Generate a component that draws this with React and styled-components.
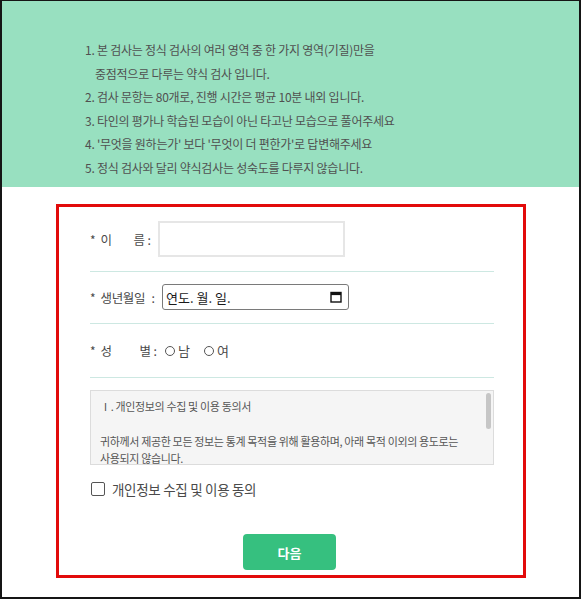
import { useState } from "react";
import styled, { createGlobalStyle } from "styled-components";

const GlobalStyle = createGlobalStyle`
  body {
    margin: 0;
    background: #fff;
    font-family: "Noto Sans CJK KR", "Noto Sans", sans-serif;
  }
`;

const notices = [
  { text: "1. 본 검사는 정식 검사의 여러 영역 중 한 가지 영역(기질)만을" },
  { text: "중점적으로 다루는 약식 검사 입니다.", indent: true },
  { text: "2. 검사 문항는 80개로, 진행 시간은 평균 10분 내외 입니다." },
  { text: "3. 타인의 평가나 학습된 모습이 아닌 타고난 모습으로 풀어주세요" },
  { text: "4. '무엇을 원하는가' 보다 '무엇이 더 편한가'로 답변해주세요" },
  { text: "5. 정식 검사와 달리 약식검사는 성숙도를 다루지 않습니다." },
];

function App() {
  const [name, setName] = useState("");
  const [gender, setGender] = useState("");
  const [agree, setAgree] = useState(false);

  return (
    <>
      <GlobalStyle />
      <Page>
        <Header>
          {notices.map((n) => (
            <Notice key={n.text} $indent={n.indent}>{n.text}</Notice>
          ))}
        </Header>

        <FormBox>
          <Row $pad="14px 0">
            <Label>
              <Star>*</Star>
              <Name $width={44}><span>이</span><span>름</span></Name>
              <span>:</span>
            </Label>
            <TextInput value={name} onChange={(e) => setName(e.target.value)} />
          </Row>

          <Row $pad="12px 0 13px">
            <Label>
              <Star>*</Star>
              <Name $width={48}>생년월일</Name>
              <span>:</span>
            </Label>
            <DateBox>
              <DateText placeholder="연도. 월. 일." />
              <svg width="12" height="12" viewBox="0 0 12 12">
                <rect x="1" y="1.5" width="10" height="9.5" fill="none" stroke="#111" strokeWidth="1.4" />
                <rect x="1" y="1.5" width="10" height="2.6" fill="#111" />
              </svg>
            </DateBox>
          </Row>

          <Row $height={53}>
            <Label>
              <Star>*</Star>
              <Name $width={50}><span>성</span><span>별</span></Name>
              <span>:</span>
            </Label>
            <RadioGroup>
              {["남", "여"].map((g) => (
                <RadioLabel key={g}>
                  <Radio
                    type="radio"
                    name="gender"
                    checked={gender === g}
                    onChange={() => setGender(g)}
                  />
                  {g}
                </RadioLabel>
              ))}
            </RadioGroup>
          </Row>

          <TermsFrame>
            <Terms>
              <TermsTitle>Ⅰ. 개인정보의 수집 및 이용 동의서</TermsTitle>
              <TermsBody>
                귀하께서 제공한 모든 정보는 통계 목적을 위해 활용하며, 아래 목적 이외의 용도로는 사용되지 않습니다.
              </TermsBody>
              <TermsBody>수집 항목 : 이름, 생년월일, 성별</TermsBody>
            </Terms>
            <ScrollThumb />
          </TermsFrame>

          <AgreeRow>
            <Check type="checkbox" checked={agree} onChange={(e) => setAgree(e.target.checked)} />
            <span>개인정보 수집 및 이용 동의</span>
          </AgreeRow>

          <ButtonWrap>
            <NextButton>다음</NextButton>
          </ButtonWrap>
        </FormBox>
      </Page>
    </>
  );
}

const Page = styled.div`
  width: 581px;
  height: 599px;
  box-sizing: border-box;
  border: 2px solid #151515;
  border-top-width: 1px;
  overflow: hidden;
`;

const Header = styled.div`
  height: 186px;
  box-sizing: border-box;
  background: #98e0c0;
  padding: 37px 0 0 83px;
  color: #505050;
  font-size: 12px;
  letter-spacing: -0.25px;
  line-height: 23.5px;
`;

const Notice = styled.div`
  padding-left: ${({ $indent }) => ($indent ? "10px" : "0")};
`;

const FormBox = styled.div`
  width: 470px;
  height: 374px;
  box-sizing: border-box;
  margin: 17px 0 0 54px;
  border: 3px solid #e20a0a;
  padding: 0 29px 0 31px;
  display: flex;
  flex-direction: column;
`;

const Row = styled.div`
  display: flex;
  align-items: center;
  padding: ${({ $pad }) => $pad || "0"};
  height: ${({ $height }) => ($height ? `${$height}px` : "auto")};
  border-bottom: 1px solid #cde8e2;
  color: #4a4a4a;
  font-size: 12.5px;
`;

const Label = styled.div`
  display: flex;
  align-items: center;
  gap: 3px;
  margin-right: 7px;
`;

const Star = styled.span`
  font-size: 12px;
  color: #4a4a4a;
`;

const Name = styled.span`
  display: inline-flex;
  justify-content: space-between;
  width: ${({ $width }) => $width}px;
  margin-left: 2px;
  letter-spacing: -0.4px;
`;

const TextInput = styled.input`
  width: 187px;
  height: 36px;
  box-sizing: border-box;
  border: 2px solid #e6e6e6;
  outline: none;
  font-size: 13px;
  padding: 0 8px;
`;

const DateBox = styled.label`
  display: flex;
  align-items: center;
  width: 187px;
  height: 26px;
  box-sizing: border-box;
  border: 1px solid #7a7a7a;
  border-radius: 3px;
  padding: 0 6px 0 3px;
`;

const DateText = styled.input`
  flex: 1;
  min-width: 0;
  border: none;
  outline: none;
  padding: 0;
  font-size: 13px;
  font-family: "Noto Sans CJK KR", sans-serif;
  &::placeholder {
    color: #1a1a1a;
  }
`;

const RadioGroup = styled.div`
  display: flex;
  gap: 14px;
  margin-left: 1px;
`;

const RadioLabel = styled.label`
  display: flex;
  align-items: center;
  gap: 3px;
  font-size: 13px;
`;

const Radio = styled.input`
  appearance: none;
  margin: 0;
  width: 10px;
  height: 10px;
  border: 1px solid #555;
  border-radius: 50%;
  &:checked {
    background: radial-gradient(#555 40%, transparent 45%);
  }
`;

const TermsFrame = styled.div`
  position: relative;
  margin-top: 12px;
  height: 75px;
  box-sizing: border-box;
  border: 1px solid #dcdcdc;
  background: #f5f5f5;
`;

const Terms = styled.div`
  height: 100%;
  box-sizing: border-box;
  padding: 7px 20px 0 9px;
  overflow: hidden;
  color: #555;
  font-size: 11px;
  line-height: 17.5px;
  letter-spacing: -0.35px;
  word-break: keep-all;
`;

const ScrollThumb = styled.div`
  position: absolute;
  top: 2px;
  right: 2px;
  width: 5px;
  height: 36px;
  border-radius: 3px;
  background: #c6c6c6;
`;

const TermsTitle = styled.div`
  margin-bottom: 17px;
`;

const TermsBody = styled.div`
  margin-bottom: 17px;
`;

const AgreeRow = styled.label`
  margin-top: 15px;
  display: flex;
  align-items: center;
  gap: 7px;
  color: #4a4a4a;
  font-size: 13.5px;
  letter-spacing: -0.3px;
  line-height: 18px;
`;

const Check = styled.input`
  appearance: none;
  flex: none;
  margin: 0 0 0 1px;
  width: 14px;
  height: 14px;
  border: 1px solid #555;
  border-radius: 2px;
  &:checked {
    background: #36c07f;
    border-color: #36c07f;
  }
`;

const ButtonWrap = styled.div`
  margin-top: 36px;
  display: flex;
  justify-content: center;
  padding-right: 5px;
`;

const NextButton = styled.button`
  width: 93px;
  height: 36px;
  border: none;
  border-radius: 4px;
  background: #36c07f;
  color: #fff;
  font-family: "Noto Sans CJK KR", sans-serif;
  font-weight: 700;
  font-size: 13px;
  cursor: pointer;
`;

export default App;
